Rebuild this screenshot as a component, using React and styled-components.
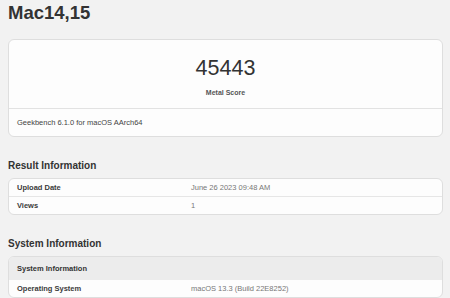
import React from 'react';
import styled, { createGlobalStyle } from 'styled-components';

const GlobalStyle = createGlobalStyle`
	html, body {
		margin: 0;
		padding: 0;
		background: #f2f2f2;
	}

	body {
		font-family: "Liberation Sans", Arial, Helvetica, sans-serif;
		color: #333;
	}
`;

const resultRows = [
	{label: 'Upload Date', value: 'June 26 2023 09:48 AM'},
	{label: 'Views', value: '1'}
];

const systemRows = [
	{label: 'Operating System', value: 'macOS 13.3 (Build 22E8252)'}
];

const App = () => (
	<Page>
		<GlobalStyle />
		<Title>Mac14,15</Title>

		<ScoreCard>
			<ScoreBody>
				<Score>45443</Score>
				<ScoreLabel>Metal Score</ScoreLabel>
			</ScoreBody>
			<ScoreFooter>Geekbench 6.1.0 for macOS AArch64</ScoreFooter>
		</ScoreCard>

		<SectionTitle>Result Information</SectionTitle>
		<Table>
			{resultRows.map(r => (
				<Row key={r.label}>
					<Label>{r.label}</Label>
					<Value>{r.value}</Value>
				</Row>
			))}
		</Table>

		<SectionTitle>System Information</SectionTitle>
		<Table>
			<HeadRow>System Information</HeadRow>
			{systemRows.map(r => (
				<Row key={r.label}>
					<Label>{r.label}</Label>
					<Value>{r.value}</Value>
				</Row>
			))}
		</Table>
	</Page>
);

const Page = styled.div`
	padding: 0 7px 0 8px;
	height: 298px;
	overflow: hidden;
`;

const Title = styled.h1`
	margin: 4px 0 17px;
	font-size: 18.5px;
	line-height: 18px;
	font-weight: 700;
	color: #333;
`;

const Card = styled.div`
	background: #fdfdfd;
	border: 1px solid #dedede;
	border-radius: 6px;
	overflow: hidden;
`;

const ScoreCard = styled(Card)`
	display: flex;
	flex-direction: column;
`;

const ScoreBody = styled.div`
	height: 69px;
	display: flex;
	flex-direction: column;
	align-items: center;
	padding-top: 17px;
	box-sizing: border-box;
	border-bottom: 1px solid #e2e2e2;
`;

const Score = styled.div`
	font-size: 21.5px;
	line-height: 22px;
	color: #333;
`;

const ScoreLabel = styled.div`
	margin-top: 9px;
	font-size: 7px;
	line-height: 9px;
	font-weight: 700;
	color: #555;
`;

const ScoreFooter = styled.div`
	height: 27px;
	display: flex;
	align-items: center;
	padding: 0 8px;
	font-size: 7.5px;
	color: #444;
`;

const SectionTitle = styled.h2`
	margin: 23px 0 6px;
	font-size: 10px;
	line-height: 12px;
	font-weight: 700;
	color: #333;
`;

const Table = styled(Card)``;

const Row = styled.div`
	display: grid;
	grid-template-columns: 174px 1fr;
	height: 17px;
	align-items: center;
	padding: 0 8px;
	font-size: 7.5px;

	& + & {
		border-top: 1px solid #e6e6e6;
	}
`;

const HeadRow = styled.div`
	height: 23px;
	display: flex;
	align-items: center;
	padding: 0 8px;
	background: #ececec;
	font-size: 7.5px;
	font-weight: 700;
	color: #333;
`;

const Label = styled.span`
	font-weight: 700;
	color: #3a3a3a;
`;

const Value = styled.span`
	color: #777;
`;

export default App;
